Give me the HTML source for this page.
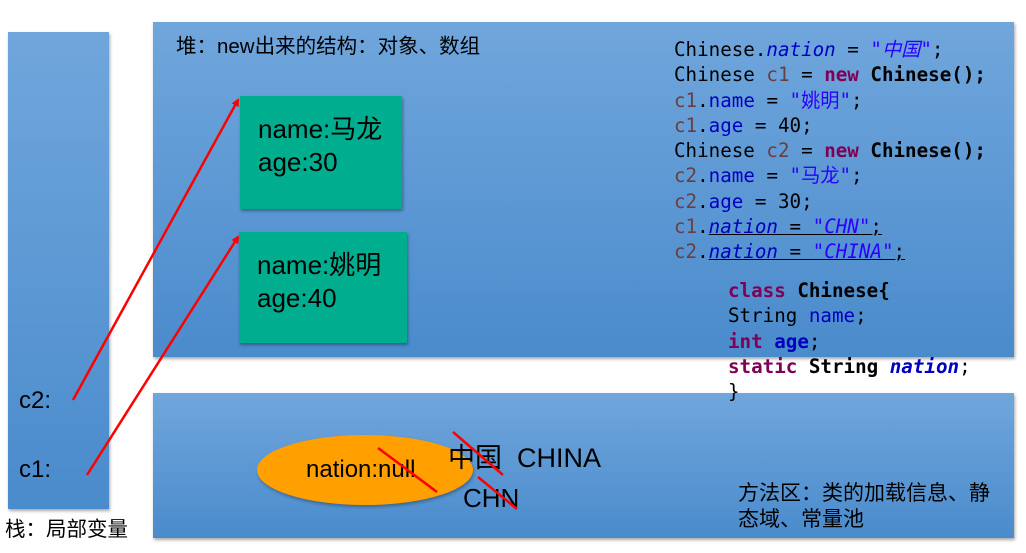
<!DOCTYPE html>
<html><head><meta charset="utf-8"><style>
body{margin:0;width:1026px;height:553px;background:#fff;position:relative;overflow:hidden;font-family:"Liberation Sans","Noto Sans CJK SC",sans-serif}
.p{position:absolute;background:linear-gradient(#70a6dc,#4a8bcc);box-shadow:1px 2px 3px rgba(0,0,0,.35)}
.g{position:absolute;background:#00ad8e;box-shadow:1px 2px 3px rgba(0,0,0,.35);font-size:26px;line-height:33px;padding:17px 0 0 18px;box-sizing:border-box;color:#000}
.t{position:absolute;color:#000;white-space:nowrap}
.code{position:absolute;font-family:"DejaVu Sans Mono","Liberation Mono",monospace;font-size:19.2px;line-height:25.3px;white-space:pre;color:#000}
.k{color:#7f0055;font-weight:bold}.f{color:#0000c0}.v{color:#6a3e3e}.s{color:#2a00ff}.b{font-weight:bold}i{font-style:italic}
.u{text-decoration:underline}
</style></head><body>
<div class="p" style="left:8px;top:32px;width:101px;height:477px"></div>
<div class="p" style="left:153px;top:22px;width:861px;height:335px"></div>
<div class="p" style="left:153px;top:393px;width:861px;height:145px"></div>
<div class="t" style="left:176px;top:29px;font-size:20.5px">堆：new出来的结构：对象、数组</div>
<div class="g" style="left:240px;top:96px;width:162px;height:113px">name:马龙<br>age:30</div>
<div class="g" style="left:239px;top:232px;width:168px;height:111px">name:姚明<br>age:40</div>
<div class="t" style="left:19px;top:387px;font-size:24px">c2:</div>
<div class="t" style="left:19px;top:456px;font-size:24px">c1:</div>
<div class="t" style="left:5px;top:512px;font-size:20.5px">栈：局部变量</div>
<div class="code" style="left:674px;top:37px">Chinese.<i class="f">nation</i> = <i class="s">"中国"</i>;
Chinese <span class="v">c1</span> = <span class="k">new</span> <span class="b">Chinese();</span>
<span class="v">c1</span>.<span class="f">name</span> = <span class="s">"姚明"</span>;
<span class="v">c1</span>.<span class="f">age</span> = 40;
Chinese <span class="v">c2</span> = <span class="k">new</span> <span class="b">Chinese();</span>
<span class="v">c2</span>.<span class="f">name</span> = <span class="s">"马龙"</span>;
<span class="v">c2</span>.<span class="f">age</span> = 30;
<span class="v">c1</span>.<span class="u"><i class="f">nation</i> = <i class="s">"CHN"</i>;</span>
<span class="v">c2</span>.<span class="u"><i class="f">nation</i> = <i class="s">"CHINA"</i>;</span></div>
<div class="code" style="left:728px;top:278px"><span class="k">class</span> <span class="b">Chinese{</span>
String <span class="f">name</span>;
<span class="k">int</span> <span class="f b">age</span>;
<span class="k">static</span> <span class="b">String</span> <i class="f b">nation</i>;
}</div>
<div style="position:absolute;left:257px;top:435px;width:216px;height:70px;border-radius:50%;background:#ffa000;box-shadow:1px 2px 3px rgba(0,0,0,.3)"></div>
<div class="t" style="left:306px;top:456px;font-size:24px">nation:null</div>
<div class="t" style="left:448px;top:436px;font-size:27px">中国&nbsp;&nbsp;CHINA</div>
<div class="t" style="left:463px;top:483px;font-size:26px">CHN</div>
<div class="t" style="left:738px;top:481px;font-size:21px;line-height:26px">方法区：类的加载信息、静<br>态域、常量池</div>
<svg style="position:absolute;left:0;top:0" width="1026" height="553">
<defs><marker id="a" markerWidth="8" markerHeight="8" refX="6" refY="4" orient="auto" markerUnits="userSpaceOnUse"><path d="M0,0 L8,4 L0,8z" fill="#f00"/></marker></defs>
<g stroke="#f00" stroke-width="2.5" fill="none">
<line x1="73" y1="400" x2="238" y2="100" marker-end="url(#a)"/>
<line x1="87" y1="475" x2="238" y2="237" marker-end="url(#a)"/>
<line x1="378" y1="448" x2="437" y2="492"/>
<line x1="453" y1="432" x2="503" y2="475"/>
<line x1="478" y1="477" x2="517" y2="509"/>
</g></svg>
</body></html>
